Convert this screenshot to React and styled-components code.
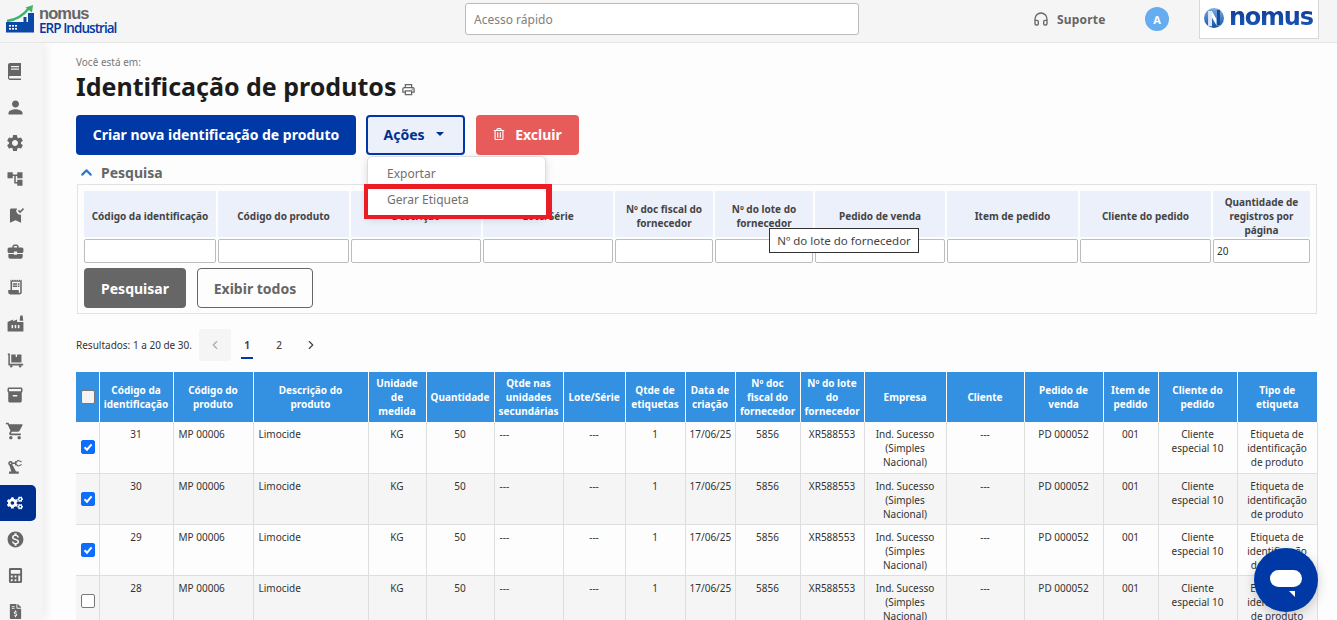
import React from "react";
import styled, { createGlobalStyle } from "styled-components";
import {
  MdAccountTree, MdBookmarkAdded, MdBusinessCenter, MdReceiptLong, MdFactory, MdInventory2,
  MdShoppingCart, MdPrecisionManufacturing, MdMonetizationOn, MdPerson,
  MdSettings, MdOutlineLocalPrintshop,
} from "react-icons/md";
import { FaCogs, FaFileInvoiceDollar, FaRegTrashAlt, FaCalculator } from "react-icons/fa";
import { LuChevronLeft, LuChevronRight, LuChevronUp, LuHeadphones } from "react-icons/lu";

const Global = createGlobalStyle`
  html, body { margin: 0; height: 100%; overflow: hidden; background: #fdfdfd; }
  #root { height: 100%; }
  * { box-sizing: border-box; }
  body { font-family: "Noto Sans", "Open Sans", sans-serif; color: #333; }
`;

const Page = styled.div`
  height: 620px; display: flex; flex-direction: column; overflow: hidden; position: relative;
`;
const Header = styled.header`
  flex: none; height: 43px; background: #f5f5f5; border-bottom: 1px solid #e6e6e6;
  display: flex; align-items: flex-start; position: relative; z-index: 2;
`;
const Brand = styled.div`
  width: 465px; height: 38px; display: flex; padding: 5px 0 0 6px; gap: 5px;
`;
const BrandText = styled.div`
  display: flex; flex-direction: column; padding-top: 2px;
`;
const BrandName = styled.span`
  font: bold 16.5px/12px "Liberation Sans", sans-serif; color: #666; letter-spacing: -0.9px;
`;
const BrandSub = styled.span`
  font: 600 13.5px/16px "Open Sans", sans-serif; color: #0039a6; letter-spacing: -0.95px; white-space: nowrap;
  margin-top: 1px;
`;
const QuickAccess = styled.input`
  width: 394px; height: 32px; margin-top: 3px; border: 1px solid #bbb; border-radius: 3px;
  background: #fff; padding: 0 8px; font: 12px "Noto Sans", sans-serif; color: #777;
  &::placeholder { color: #808080; opacity: 1; }
`;
const Support = styled.div`
  margin-left: 174px; height: 38px; display: flex; align-items: center; gap: 8px; width: 112px;
  font-size: 12px; font-weight: 700; color: #666; letter-spacing: 0.2px;
  svg { font-size: 16px; }
`;
const Avatar = styled.div`
  width: 24px; height: 24px; margin-top: 7px; border-radius: 50%; background: #66acf0; color: #fff;
  font-size: 11px; font-weight: 700; display: flex; align-items: center; justify-content: center;
`;
const LogoBox = styled.div`
  margin-left: 30px; width: 120px; height: 39px; background: #fff; border: 1px solid #d8d8d8; border-top: 0;
  display: flex; align-items: center; padding-left: 4px; gap: 5px;
`;
const LogoWord = styled.span`
  font: bold 24px/30px "DejaVu Sans", sans-serif; letter-spacing: -1.25px; margin-top: -4px;
  background: linear-gradient(#0d2f8c, #1d62bd); -webkit-background-clip: text; background-clip: text; color: transparent;
`;
const Body = styled.div`
  flex: 1; min-height: 0; display: flex;
`;
const Sidebar = styled.nav`
  flex: none; width: 43px; background: #f5f5f5; box-shadow: 3px 0 10px rgba(0,0,0,.07);
  padding-top: 10px; display: flex; flex-direction: column; position: relative; z-index: 1;
`;
const NavItem = styled.div`
  width: 36px; height: 36px; flex: none; display: flex; align-items: center; justify-content: center;
  color: ${p => (p.$active ? "#fff" : "#666")}; font-size: ${p => p.$size || 20}px;
  background: ${p => (p.$active ? "#00308f" : "transparent")};
  border-radius: ${p => (p.$active ? "0 5px 5px 0" : "0")};
  padding-right: 6px;
`;
const Main = styled.main`
  flex: 1; min-width: 0; padding: 12px 20px 0 33px; display: flex; flex-direction: column; align-items: flex-start;
  & > * { flex: none; }
`;
const Crumb = styled.div`
  font-size: 10px; line-height: 14px; color: #777;
`;
const TitleRow = styled.div`
  display: flex; align-items: center; gap: 5px; margin-top: 2px; height: 30px;
  svg { font-size: 15px; color: #666; margin-top: 7px; }
`;
const Title = styled.h1`
  margin: 0; font-size: 25px; line-height: 30px; font-weight: 700; color: #1c1c1c;
`;
const Actions = styled.div`
  display: flex; gap: 10px; margin-top: 14px; height: 40px; position: relative; z-index: 3;
`;
const Button = styled.button`
  height: 40px; border-radius: 4px; font: 700 14px "Noto Sans", sans-serif; padding: 0 ${p => p.$pr || 0}px 2px 0; white-space: nowrap;
  width: ${p => p.$w}px; display: flex; align-items: center; justify-content: center; gap: ${p => p.$gap || 0}px;
  border: ${p => p.$border || "0"}; background: ${p => p.$bg}; color: ${p => p.$fg || "#fff"};
`;
const DropWrap = styled.div`
  position: relative; margin-right: 1px;
`;
const Menu = styled.div`
  position: absolute; left: 1px; top: 41px; width: 179px; height: 60px; background: #fff; border: 1px solid #ddd;
  border-radius: 5px; box-shadow: 0 3px 8px rgba(0,0,0,.15); padding-top: 4px;
`;
const MenuItem = styled.div`
  height: 26px; line-height: 26px; padding-left: 19px; font-size: 12px; color: #707070; font-weight: 400;
`;
const Highlight = styled.div`
  position: absolute; left: -2px; top: 69px; width: 188px; height: 35px; border: solid #ec1c24; border-width: 5px 6px 4px 4px;
  padding: 0 0 0 19px; background: #fff; font-size: 12px; line-height: 22px; color: #707070;
`;
const SectionTitle = styled.div`
  display: flex; align-items: center; gap: 6px; height: 20px; margin: 7px 0 2px 2px;
  font-size: 14px; font-weight: 700; color: #666;
  svg { font-size: 17px; color: #2a7ad0; stroke-width: 3; }
`;
const Panel = styled.section`
  width: 1240px; height: 130px; margin-left: 1px; border: 1px solid #e3e3e3; padding: 4px 4px 0;
`;
const SearchTable = styled.table`
  table-layout: fixed; border-collapse: separate; border-spacing: 2px; width: 1230px;
`;
const SearchHead = styled.th`
  width: ${p => p.$w}px; height: 46px; padding: 4px 4px 0; background: #ecf0fb; font-size: 10px; line-height: 14px; font-weight: 700;
  color: #444; text-align: center;
`;
const SearchCell = styled.td`
  padding: 0;
`;
const SearchInput = styled.input`
  display: block; width: 100%; height: 24px; border: 1px solid #bdbdbd; border-radius: 2px; background: #fff;
  padding: 0 3px; font: 10px "Noto Sans", sans-serif; color: #333;
`;
const PanelButtons = styled.div`
  display: flex; gap: 11px; margin: 3px 0 0 2px;
  button { padding-bottom: 0; }
`;
const ResultsRow = styled.div`
  display: flex; align-items: center; height: 32px; margin-top: 15px;
`;
const ResultText = styled.span`
  font-size: 10px; color: #333; width: 123px; white-space: nowrap;
`;
const PageBtn = styled.div`
  width: 32px; height: 32px; display: flex; align-items: center; justify-content: center; position: relative;
  font-size: ${p => (p.$icon ? 14 : 10)}px; font-weight: ${p => (p.$current ? 700 : 500)}; border-radius: 3px;
  color: ${p => (p.$disabled ? "#aaa" : "#444")}; background: ${p => (p.$disabled ? "#f5f5f5" : "transparent")};
  ${p => p.$current && `&::after { content: ""; position: absolute; left: 10px; width: 12px; bottom: 2px; height: 2px; background: #0039a6; }`}
`;
const DataTable = styled.table`
  table-layout: fixed; border-collapse: collapse; width: 1241px; margin-top: 11px; flex: none;
`;
const Th = styled.th`
  width: ${p => p.$w}px; height: 50px; background: #3490e0; color: #fff; font-size: 10px; line-height: 14px;
  font-weight: 700; padding: 0 4px; border-right: 1px solid #fff; text-align: center; white-space: pre-line; &:last-child { border-right: 0; }
`;
const Tr = styled.tr`
  background: ${p => (p.$alt ? "#f5f5f5" : "#fdfdfd")};
`;
const Td = styled.td`
  height: 51px; padding: 5px 4px 1px ${p => (p.$left ? "5px" : "4px")}; vertical-align: top; font-size: 10px; line-height: 14px; color: #333;
  text-align: ${p => (p.$left ? "left" : "center")}; border: 1px solid #dedede; border-top: 0; border-left: 0;
`;
const CheckTd = styled.td`
  padding: 0 0 0 5px; vertical-align: middle; border: 1px solid #dedede; border-top: 0; border-left: 0;
`;
const CheckTh = styled(Th)`
  padding: 0 0 0 5px; text-align: left;
`;
const Check = styled.span`
  display: flex; width: 14px; height: 14px; border-radius: 2px; align-items: center; justify-content: center;
  background: ${p => (p.$on ? "#0d6efd" : "#fff")}; border: 1px solid ${p => (p.$on ? "#0d6efd" : "#777")};
  ${p => p.$head && "background:#f4f4f4;"}
`;
const Tooltip = styled.div`
  position: absolute; left: 769px; top: 228px; width: 150px; height: 25px; background: #fff; border: 1px solid #333;
  font-size: 11.5px; line-height: 23px; text-align: center; color: #444; z-index: 4; white-space: nowrap;
`;
const Chat = styled.div`
  position: absolute; left: 1254px; top: 548px; width: 64px; height: 64px; border-radius: 50%; background: #0039a6;
  box-shadow: 0 3px 12px rgba(0,0,0,.2); z-index: 5; display: flex; align-items: center; justify-content: center; padding-top: 8px;
`;

const BookIcon = () => (
  <svg width="14" height="17" viewBox="0 0 14 17" fill="currentColor">
    <path d="M2 0h11v13H2.2C1.4 13 1 13.6 1 14.2s.4 1.3 1.2 1.3H13V17H2C.8 17 0 16 0 14.8V2C0 .8.9 0 2 0z" />
    <rect x="3" y="3" width="8" height="1.2" fill="#f5f5f5" /><rect x="3" y="5.5" width="8" height="1.2" fill="#f5f5f5" />
  </svg>
);

const TrolleyIcon = () => (
  <svg width="17" height="17" viewBox="0 0 20 20" fill="currentColor">
    <path d="M1 3h2.4v12H19v2H1.6V5H1z" />
    <path d="M5 4h5.2v3h1.6V4H17v9.5H5z" />
    <circle cx="5" cy="18" r="1.4" /><circle cx="15.5" cy="18" r="1.4" />
  </svg>
);

const LogoMark = () => (
  <svg width="28" height="28" viewBox="0 0 28 28">
    <rect x="0" y="17" width="28" height="10.5" fill="#0a48a8" />
    <rect x="22" y="8" width="6" height="12" fill="#0a48a8" />
    <rect x="17.5" y="12" width="3" height="6" fill="#0a48a8" />
    <path d="M1 16C9 15 17 11 23 3" fill="none" stroke="#3fb36a" strokeWidth="2.4" />
    <path d="M19.5 2.5L27 0l-1 7.5z" fill="#3fb36a" />
    <g fill="#fff">
      <rect x="3" y="20" width="2" height="1.6" /><rect x="6" y="20" width="2" height="1.6" /><rect x="9" y="20" width="2" height="1.6" />
      <rect x="3" y="23" width="2" height="1.6" /><rect x="6" y="23" width="2" height="1.6" /><rect x="9" y="23" width="2" height="1.6" />
    </g>
  </svg>
);

const NomusMark = () => (
  <svg width="20" height="20" viewBox="0 0 23 23" style={{ marginTop: -3 }}>
    <defs><linearGradient id="ng" x1="0" y1="0" x2="0" y2="1"><stop offset="0" stopColor="#7eb0dd" /><stop offset="1" stopColor="#0f4ea8" /></linearGradient></defs>
    <circle cx="11.5" cy="11.5" r="11.5" fill="url(#ng)" />
    <path d="M5 20V3.5h4L14.5 13V2h4v18h-4L9 10.5V21z" fill="#fff" />
    <path d="M14.5 2h4v18h-4z" fill="#0f4ea8" />
    <path d="M5 3.5h4V21H5z" fill="#dbe7f5" />
  </svg>
);

const searchCols = [
  ["Código da identificação", 132], ["Código do produto", 131], ["Descrição", 130], ["Lote/Série", 130],
  ["Nº doc fiscal do fornecedor", 98], ["Nº do lote do fornecedor", 98], ["Pedido de venda", 130],
  ["Item de pedido", 131], ["Cliente do pedido", 131], ["Quantidade de registros por página", 97],
];

const cols = [
  ["Código da identificação", 74], ["Código do produto", 80], ["Descrição do\nproduto", 115], ["Unidade de medida", 58],
  ["Quantidade", 68], ["Qtde nas unidades secundárias", 69], ["Lote/Série", 62], ["Qtde de etiquetas", 60],
  ["Data de criação", 50], ["Nº doc fiscal do fornecedor", 65], ["Nº do lote do fornecedor", 64], ["Empresa", 82],
  ["Cliente", 78], ["Pedido de venda", 79], ["Item de pedido", 55], ["Cliente do pedido", 79], ["Tipo de etiqueta", 80],
];

const rows = [["31", true], ["30", true], ["29", true], ["28", false]];

const navIcons = [
  [<BookIcon key="a" />, 20], [<MdPerson key="b" />, 21], [<MdSettings key="c" />, 20], [<MdAccountTree key="d" />, 18],
  [<MdBookmarkAdded key="e" />, 19], [<MdBusinessCenter key="f" />, 19], [<MdReceiptLong key="g" />, 18], [<MdFactory key="h" />, 19],
  [<TrolleyIcon key="i" />, 20], [<MdInventory2 key="j" />, 18], [<MdShoppingCart key="k" />, 20], [<MdPrecisionManufacturing key="l" />, 18],
  [<FaCogs key="m" />, 16, true], [<MdMonetizationOn key="n" />, 19], [<FaCalculator key="o" />, 15], [<FaFileInvoiceDollar key="p" />, 15],
];

const Tick = () => (
  <svg width="10" height="10" viewBox="0 0 10 10"><path d="M1.5 5.2L4 7.7 8.6 2.4" fill="none" stroke="#fff" strokeWidth="2" /></svg>
);

export default function App() {
  return (
    <Page>
      <Global />
      <Header>
        <Brand>
          <LogoMark />
          <BrandText>
            <BrandName>nomus</BrandName>
            <BrandSub>ERP Industrial</BrandSub>
          </BrandText>
        </Brand>
        <QuickAccess placeholder="Acesso rápido" />
        <Support><LuHeadphones />Suporte</Support>
        <Avatar>A</Avatar>
        <LogoBox><NomusMark /><LogoWord>nomus</LogoWord></LogoBox>
      </Header>
      <Body>
        <Sidebar>
          {navIcons.map(([icon, size, active], i) => (
            <NavItem key={i} $size={size} $active={active}>{icon}</NavItem>
          ))}
        </Sidebar>
        <Main>
          <Crumb>Você está em:</Crumb>
          <TitleRow>
            <Title>Identificação de produtos</Title>
            <MdOutlineLocalPrintshop />
          </TitleRow>
          <Actions>
            <Button $w={280} $bg="#0039a6">Criar nova identificação de produto</Button>
            <DropWrap>
              <Button $w={99} $bg="#ecf0fb" $fg="#00308f" $border="2px solid #0039a6" $gap={11} $pr={4}>
                Ações
                <svg width="8" height="4" viewBox="0 0 8 4"><path d="M0 0h8L4 4z" fill="#00308f" /></svg>
              </Button>
              <Menu>
                <MenuItem>Exportar</MenuItem>
              </Menu>
              <Highlight>Gerar Etiqueta</Highlight>
            </DropWrap>
            <Button $w={103} $bg="#e85b5b" $gap={10}><FaRegTrashAlt size={12} />Excluir</Button>
          </Actions>
          <SectionTitle><LuChevronUp />Pesquisa</SectionTitle>
          <Panel>
            <SearchTable>
              <thead>
                <tr>{searchCols.map(([t, w]) => <SearchHead key={t} $w={w}>{t}</SearchHead>)}</tr>
              </thead>
              <tbody>
                <tr>
                  {searchCols.map(([t], i) => (
                    <SearchCell key={t}>
                      <SearchInput readOnly value={i === searchCols.length - 1 ? "20" : ""} />
                    </SearchCell>
                  ))}
                </tr>
              </tbody>
            </SearchTable>
            <PanelButtons>
              <Button $w={102} $bg="#666">Pesquisar</Button>
              <Button $w={116} $bg="#fdfdfd" $fg="#666" $border="1px solid #666">Exibir todos</Button>
            </PanelButtons>
          </Panel>
          <ResultsRow>
            <ResultText>Resultados: 1 a 20 de 30.</ResultText>
            <PageBtn $icon $disabled><LuChevronLeft /></PageBtn>
            <PageBtn $current>1</PageBtn>
            <PageBtn>2</PageBtn>
            <PageBtn $icon><LuChevronRight /></PageBtn>
          </ResultsRow>
          <DataTable>
            <thead>
              <tr>
                <CheckTh $w={23}><Check $head /></CheckTh>
                {cols.map(([t, w]) => <Th key={t} $w={w}>{t}</Th>)}
              </tr>
            </thead>
            <tbody>
              {rows.map(([id, on], i) => (
                <Tr key={id} $alt={i % 2 === 1}>
                  <CheckTd><Check $on={on}>{on && <Tick />}</Check></CheckTd>
                  <Td>{id}</Td>
                  <Td $left>MP 00006</Td>
                  <Td $left>Limocide</Td>
                  <Td>KG</Td>
                  <Td>50</Td>
                  <Td $left>---</Td>
                  <Td>---</Td>
                  <Td>1</Td>
                  <Td>17/06/25</Td>
                  <Td>5856</Td>
                  <Td>XR588553</Td>
                  <Td>Ind. Sucesso (Simples Nacional)</Td>
                  <Td>---</Td>
                  <Td>PD 000052</Td>
                  <Td>001</Td>
                  <Td>Cliente especial 10</Td>
                  <Td>Etiqueta de identificação de produto</Td>
                </Tr>
              ))}
            </tbody>
          </DataTable>
        </Main>
      </Body>
      <Tooltip>Nº do lote do fornecedor</Tooltip>
      <Chat>
        <svg width="34" height="28" viewBox="0 0 34 28">
          <rect x="1" y="0" width="32" height="17" rx="8.5" fill="#fff" />
          <path d="M20 21h6v6z" fill="#fff" />
        </svg>
      </Chat>
    </Page>
  );
}
